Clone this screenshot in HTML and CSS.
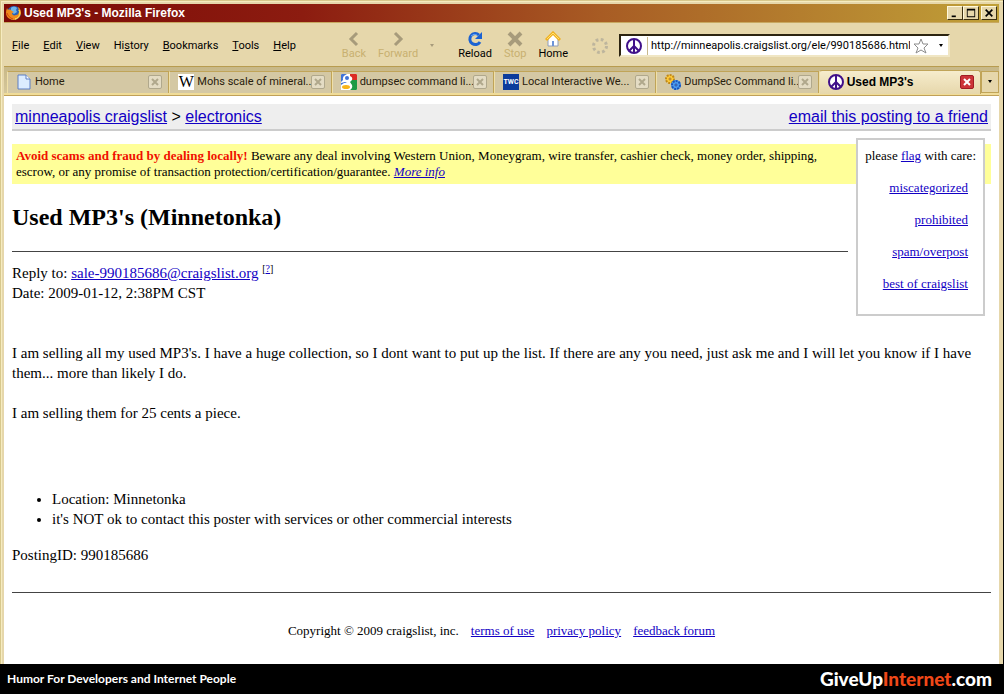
FILE: index.html
```html
<!DOCTYPE html>
<html lang="en">
<head>
    <meta charset="UTF-8">
    <meta name="viewport" content="width=device-width, initial-scale=1.0">
    <title>Used MP3's</title>
    <link rel="stylesheet" href="styles.css">
</head>
<body>
    <svg class="defs" aria-hidden="true">
        <symbol id="peace" viewBox="0 0 16 16">
            <circle cx="8" cy="8" r="7" fill="#fff" stroke="#40108a" stroke-width="2"/>
            <path d="M8 1v14M8 8l-5 5M8 8l5 5" fill="none" stroke="#40108a" stroke-width="2"/>
        </symbol>
        <symbol id="close" viewBox="0 0 8 8">
            <path d="M1 1l6 6M7 1l-6 6" fill="none" stroke="currentColor" stroke-width="2"/>
        </symbol>
    </svg>

    <div class="window">
        <div class="titlebar">
            <svg class="icon" viewBox="0 0 16 16">
                <circle cx="8" cy="8" r="7" fill="#2a62b8"/>
                <path d="M5 3c2-2 5-1 6 0l-1 2 1 2-3 2-3-2z" fill="#6fb4e8"/>
                <path d="M1 3l1 2c2-1 3 0 4 1l2 1-2 1c0 2 2 3 4 2 2 0 3-2 3-4l-1-4c3 2 4 6 2 9-2 4-7 5-10 3C0 12-1 8 1 3z" fill="#f08a1c"/>
                <path d="M13 5c2 4 0 8-4 9 4-1 6-5 4-9z" fill="#ffd84a" stroke="#ffd84a"/>
                <path d="M1 8c1 3 3 5 6 6" fill="none" stroke="#d8480c"/>
            </svg>
            <span class="caption">Used MP3's - Mozilla Firefox</span>
            <div class="controls">
                <button aria-label="Minimize"><svg viewBox="0 0 12 12"><path d="M2 9h5v2H2z"/></svg></button>
                <button aria-label="Maximize"><svg viewBox="0 0 12 12"><path d="M1 1h10v10H1zM2 3v7h8V3z" fill-rule="evenodd"/></svg></button>
                <button aria-label="Close" class="last"><svg viewBox="0 0 12 12"><path d="M2 2l8 8M10 2l-8 8" stroke="#000" stroke-width="2"/></svg></button>
            </div>
        </div>

        <div class="toolbar">
            <div class="menu">
                <button><u>F</u>ile</button>
                <button><u>E</u>dit</button>
                <button><u>V</u>iew</button>
                <button>Hi<u>s</u>tory</button>
                <button><u>B</u>ookmarks</button>
                <button><u>T</u>ools</button>
                <button><u>H</u>elp</button>
            </div>
            <div class="nav">
                <button disabled>
                    <svg viewBox="0 0 16 16"><path d="M11 2L5 8l6 6" fill="none" stroke="#a79b7b" stroke-width="3"/></svg>
                    Back
                </button>
                <button disabled>
                    <svg viewBox="0 0 16 16"><path d="M5 2l6 6-6 6" fill="none" stroke="#a79b7b" stroke-width="3"/></svg>
                    Forward
                </button>
                <button class="history" aria-label="Recent pages" disabled><span class="arrow"></span></button>
                <button>
                    <svg viewBox="0 0 16 16"><path d="M13 11a5.500 5.500 0 1 1-1-7" fill="none" stroke="#1b62d2" stroke-width="3"/><path d="M15 1v7H8z" fill="#1b62d2"/><path d="M4 5q3-3 6-1" fill="none" stroke="#6aa8f4"/></svg>
                    Reload
                </button>
                <button disabled>
                    <svg viewBox="0 0 16 16"><path d="M2 2l12 12M14 2L2 14" fill="none" stroke="#a79b7b" stroke-width="4"/></svg>
                    Stop
                </button>
                <button>
                    <svg viewBox="0 0 16 16"><path d="M3 8v7h10V8L8 3z" fill="#fff" stroke="#8e9cb8"/><path d="M7 10h2v5H7z" fill="#6c94d8"/><path d="M1 9l7-7 7 7" fill="none" stroke="#f0b020" stroke-width="3"/><path d="M2 8l6-6 6 6" fill="none" stroke="#ffe070"/></svg>
                    Home
                </button>
            </div>
            <svg class="throbber" viewBox="0 0 16 16"><circle cx="8" cy="8" r="6.500" fill="none" stroke="#bdb59d" stroke-width="3" stroke-dasharray="2.700 2.400"/></svg>
            <div class="urlbar">
                <span class="site"><svg class="icon"><use href="#peace"/></svg></span>
                <input type="text" aria-label="Address" value="http://minneapolis.craigslist.org/ele/990185686.html">
                <button aria-label="Bookmark this page">
                    <svg class="icon" viewBox="0 0 16 16"><path d="M8 1l2 5h5l-4 4 2 5-5-3-5 3 2-5-4-4h5z" fill="#fff" stroke="#8c8c8c"/></svg>
                </button>
                <button class="drop" aria-label="Show history"><span class="arrow"></span></button>
            </div>
        </div>

        <div class="tabs">
            <div class="tab">
                <svg class="icon" viewBox="0 0 16 16"><path d="M2 1h8l4 4v10H2z" fill="#dcecff" stroke="#5c7fc4"/><path d="M10 1v4h4" fill="#fff" stroke="#5c7fc4"/></svg>
                <a href="#">Home</a>
                <button aria-label="Close tab"><svg><use href="#close"/></svg></button>
            </div>
            <div class="tab">
                <span class="icon wiki">W</span>
                <a href="#">Mohs scale of mineral...</a>
                <button aria-label="Close tab"><svg><use href="#close"/></svg></button>
            </div>
            <div class="tab">
                <svg class="icon" viewBox="0 0 16 16">
                    <path d="M0 0h16v16H0z" fill="#fff"/>
                    <path d="M0 1q0-1 1-1h5Q1 2 2 6l-2 2z" fill="#3f73d8"/>
                    <path d="M9 0h6q1 0 1 1v5h-5q1-3-2-4z" fill="#dc2c24"/>
                    <path d="M11 6h5v9q0 1-1 1h-6q3-2 2-5L9 8z" fill="#1c9a44"/>
                    <ellipse cx="6" cy="4" rx="2" ry="2" fill="#3f73d8"/>
                    <path d="M0 9l4-1 2 1H3L0 11z" fill="#3f73d8"/>
                    <ellipse cx="5" cy="13" rx="4" ry="2" fill="#f8b418"/>
                </svg>
                <a href="#">dumpsec command li...</a>
                <button aria-label="Close tab"><svg><use href="#close"/></svg></button>
            </div>
            <div class="tab">
                <span class="icon twc">TWC</span>
                <a href="#">Local Interactive We...</a>
                <button aria-label="Close tab"><svg><use href="#close"/></svg></button>
            </div>
            <div class="tab">
                <svg class="icon" viewBox="0 0 16 16">
                    <circle cx="5" cy="5" r="4" fill="#ffcc38"/>
                    <circle cx="5" cy="5" r="4" fill="none" stroke="#c08818" stroke-width="2" stroke-dasharray="2 1"/>
                    <circle cx="5" cy="5" r="1" fill="#fff" stroke="#a86c08"/>
                    <circle cx="11" cy="11" r="5" fill="#4c9cf0"/>
                    <circle cx="11" cy="11" r="4" fill="none" stroke="#1c54b8" stroke-width="2" stroke-dasharray="2 1"/>
                    <circle cx="11" cy="11" r="1" fill="#fff" stroke="#103c98"/>
                </svg>
                <a href="#">DumpSec Command li...</a>
                <button aria-label="Close tab"><svg><use href="#close"/></svg></button>
            </div>
            <div class="tab active">
                <svg class="icon"><use href="#peace"/></svg>
                <a href="#">Used MP3's</a>
                <button aria-label="Close tab"><svg><use href="#close"/></svg></button>
            </div>
            <button class="alltabs" aria-label="List all tabs"><span class="arrow"></span></button>
        </div>

        <main class="page">
            <div class="crumbs">
                <span><a href="#">minneapolis craigslist</a> &gt; <a href="#">electronics</a></span>
                <a href="#">email this posting to a friend</a>
            </div>

            <div class="flags">
                <p>please <a href="#">flag</a> with care:</p>
                <a href="#">miscategorized</a>
                <a href="#">prohibited</a>
                <a href="#">spam/overpost</a>
                <a href="#">best of craigslist</a>
            </div>

            <div class="warning">
                <b>Avoid scams and fraud by dealing locally!</b> Beware any deal involving Western Union, Moneygram, wire transfer, cashier check, money order, shipping, escrow, or any promise of transaction protection/certification/guarantee. <a href="#"><i>More info</i></a>
            </div>

            <h2>Used MP3's (Minnetonka)</h2>
            <hr>
            <div class="reply">
                Reply to: <a href="#">sale-990185686@craigslist.org</a> <sup>[<a href="#">?</a>]</sup><br>
                Date: 2009-01-12, 2:38PM CST
            </div>

            <div class="posting">
                <p>I am selling all my used MP3's. I have a huge collection, so I dont want to put up the list. If there are any you need, just ask me and I will let you know if I have them... more than likely I do.</p>
                <p>I am selling them for 25 cents a piece.</p>
            </div>

            <ul>
                <li>Location: Minnetonka</li>
                <li>it's NOT ok to contact this poster with services or other commercial interests</li>
            </ul>
            <p class="posting-id">PostingID: 990185686</p>
            <hr>
            <div class="legal">
                <span>Copyright © 2009 craigslist, inc.</span>
                <a href="#">terms of use</a>
                <a href="#">privacy policy</a>
                <a href="#">feedback forum</a>
            </div>
        </main>
    </div>

    <footer>
        <span>Humor For Developers and Internet People</span>
        <strong>GiveUp<em>Internet</em>.com</strong>
    </footer>
</body>
</html>
```
FILE: styles.css
```css
* {
    box-sizing: border-box;
}
body {
    display: flex;
    flex-direction: column;
    min-height: 100vh;
    margin: 0;
    background-color: #000;
    font-family: "Liberation Serif", serif;
    font-size: 15px;
    line-height: 20px;
    color: #000;
}
button {
    padding: 0;
    border: none;
    background: none;
    font: inherit;
    color: inherit;
}
a {
    color: #1200c4;
}
.defs {
    display: none;
}
.icon {
    flex: none;
    width: 16px;
    height: 16px;
}
.arrow {
    display: block;
    border: 2px solid transparent;
    border-top: 3px solid #000;
    border-bottom: none;
}
.window {
    flex: 1;
    display: flex;
    flex-direction: column;
    margin-right: 1px;
    padding: 4px 4px 0;
    background-color: #e6d7ab;
    box-shadow: inset 1px 1px #d8c88c, inset 2px 2px #f6ecc0;
}

/* browser chrome */
.titlebar, .toolbar, .tabs {
    display: flex;
    align-items: center;
    font-family: Roboto, sans-serif;
    font-size: 11px;
    line-height: 14px;
}
.titlebar {
    height: 18px;
    padding: 0 2px;
    background: linear-gradient(to right, #7c0a06, #8c1c10 30%, #a85c24 60%, #c0a038);
}
.caption {
    flex: 1;
    margin-left: 2px;
    font-family: "Liberation Sans", sans-serif;
    font-size: 12px;
    font-weight: bold;
    color: #fff;
}
.controls {
    display: flex;
}
.controls button {
    display: flex;
    justify-content: center;
    align-items: center;
    width: 16px;
    height: 14px;
    background-color: #e6d7ab;
    border: 1px solid;
    border-color: #fff8dc #3c3010 #3c3010 #fff8dc;
}
.controls .last {
    margin-left: 2px;
}
.controls svg {
    width: 10px;
    height: 10px;
}
.toolbar {
    height: 44px;
    padding: 2px 49px 0 8px;
    border-top: 1px solid #c8a860;
}
.menu {
    display: flex;
    gap: 14px;
}
.nav {
    display: flex;
    gap: 12px;
    margin-left: 46px;
}
.nav button {
    display: flex;
    flex-direction: column;
    align-items: center;
}
.nav button:disabled {
    color: #c8b070;
}
.nav svg {
    width: 16px;
    height: 16px;
}
.nav .history {
    justify-content: center;
    margin-right: 12px;
}
.history .arrow {
    border-top-color: #a79b7b;
}
.throbber {
    flex: none;
    width: 16px;
    height: 16px;
    margin: 0 11px 0 24px;
}
.urlbar {
    flex: 1;
    display: flex;
    align-items: center;
    height: 23px;
    background-color: #fff;
    border: 2px solid;
    border-color: #2c2410 #f0e6c4 #f0e6c4 #2c2410;
}
.site {
    display: flex;
    padding: 1px 5px;
    border-right: 1px solid #c8b88c;
}
.urlbar input {
    flex: 1;
    min-width: 0;
    padding: 0 3px;
    border: none;
    outline: none;
    font: inherit;
}
.urlbar button {
    display: flex;
}
.urlbar .drop {
    padding: 0 5px 0 10px;
}
.tabs {
    height: 30px;
    padding: 4px 0 3px 3px;
    background: linear-gradient(#c8b888, #d6c89c);
    border-top: 1px solid #b89c50;
    border-bottom: 1px solid #c0a058;
    box-shadow: inset 0 -2px #f0dc98;
}
.tab {
    flex: 1;
    display: flex;
    align-items: center;
    min-width: 0;
    height: 22px;
    padding: 0 6px 0 8px;
    background-color: #d4c8a4;
    border: 1px solid #c0a458;
    border-bottom: none;
    border-left-color: #f0e0a8;
}
.tab a {
    flex: 1;
    min-width: 0;
    margin-left: 3px;
    white-space: nowrap;
    color: #28200c;
    text-decoration: none;
}
.tab button {
    flex: none;
    display: flex;
    justify-content: center;
    align-items: center;
    width: 14px;
    height: 14px;
    border: 1px solid #b0a88c;
    border-radius: 2px;
    background-color: #e4dcc4;
    color: #b0a88c;
}
.tab button svg {
    width: 8px;
    height: 8px;
}
.wiki {
    background-color: #fff;
    font: 16px/16px "Liberation Serif", serif;
    text-align: center;
}
.twc {
    background-color: #0c3c9c;
    font-size: 7px;
    font-weight: bold;
    line-height: 16px;
    text-align: center;
    color: #fff;
}
.tab.active {
    height: 24px;
    background: linear-gradient(#f6eccc, #e6d7ab);
    border-radius: 3px 3px 0 0;
}
.active a {
    font-family: "Liberation Sans", sans-serif;
    font-size: 12px;
    font-weight: bold;
    color: #000;
}
.active button {
    background-color: #cc3438;
    border-color: #a01c24;
    color: #fff;
}
.alltabs {
    display: flex;
    justify-content: center;
    align-items: center;
    width: 18px;
    height: 22px;
    border: 1px solid #c0a458;
    background-color: #e6d7ab;
}

/* craigslist posting */
.page {
    flex: 1;
    padding: 8px;
    background-color: #fff;
}
.crumbs {
    display: flex;
    justify-content: space-between;
    margin-bottom: 13px;
    padding: 3px 3px 2px;
    background-color: #eee;
    border-bottom: 2px solid #ccc;
    font-family: "Liberation Sans", sans-serif;
    font-size: 16px;
}
.flags {
    float: right;
    display: flex;
    flex-direction: column;
    align-items: flex-end;
    gap: 16px;
    margin: -6px 6px 0 8px;
    padding: 8px 15px 22px 7px;
    background-color: #fff;
    border: 2px solid #ccc;
    font-size: 13px;
    line-height: 16px;
}
.flags p {
    margin: 0 -8px 0 0;
}
.warning {
    padding: 4px;
    background-color: #ffff99;
    font-size: 13px;
    line-height: 16px;
}
.warning b {
    color: #f01000;
}
h2 {
    margin: 19px 0 20px;
    font-size: 24px;
    line-height: 28px;
}
hr {
    height: 1px;
    margin: 0 0 11px;
    border: none;
    background-color: #444;
}
sup {
    font-size: 10px;
    line-height: 1px;
}
.posting {
    margin: 40px 0 66px;
}
.posting p {
    margin: 0 0 20px;
}
ul {
    margin: 0 0 16px;
    padding-left: 40px;
}
.posting-id {
    margin: 0 0 27px;
}
.legal {
    display: flex;
    justify-content: center;
    gap: 12px;
    margin-top: 30px;
    font-size: 13px;
    line-height: 16px;
}

footer {
    display: flex;
    justify-content: space-between;
    align-items: center;
    height: 30px;
    padding: 0 12px 0 7px;
    font-family: Lato, sans-serif;
    font-size: 12px;
    font-weight: bold;
    color: #fff;
}
footer strong {
    font-size: 19px;
}
footer em {
    font-style: normal;
    color: #f04818;
}
```
